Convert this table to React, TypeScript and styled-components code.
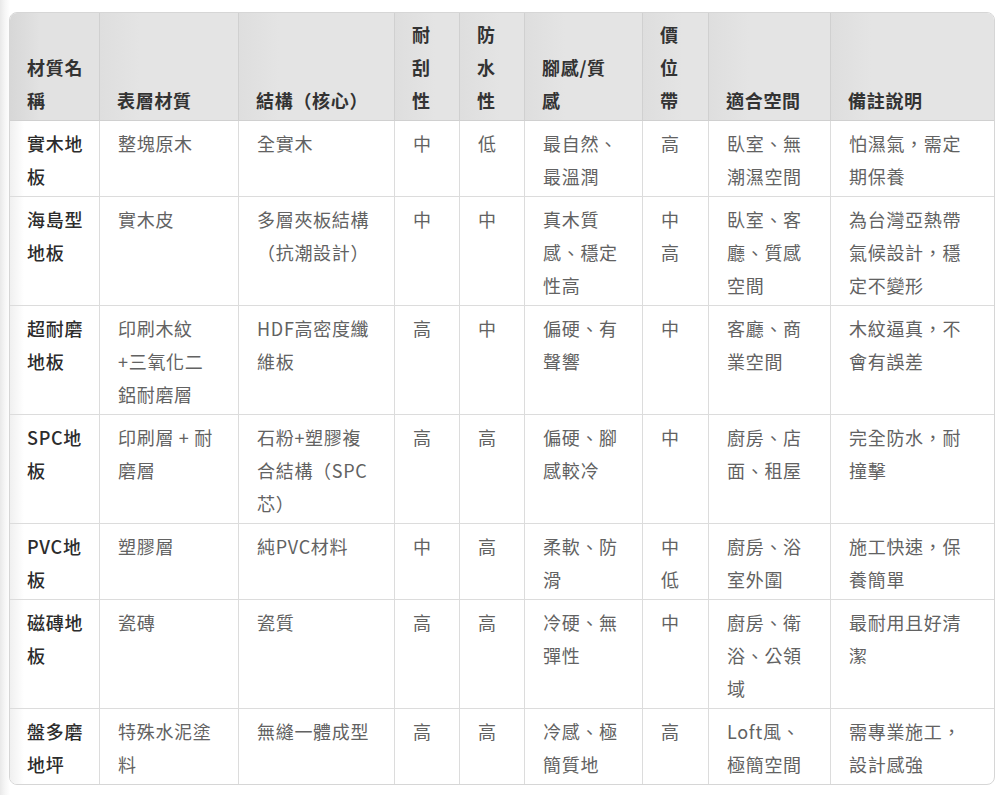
import React from 'react'
import styled, { createGlobalStyle } from 'styled-components'

const GlobalStyle = createGlobalStyle`
  html, body {
    margin: 0;
    padding: 0;
    background: #fff;
  }
  body {
    font-family: "Noto Sans CJK TC", "Noto Sans", sans-serif;
  }
`

const Page = styled.div`
  width: 1000px;
  height: 795px;
  box-sizing: border-box;
  padding: 12px 7px 0 9px;
  background: linear-gradient(to right, #e9e9e9 0, #f6f6f6 5px, #fff 10px);
`

const Table = styled.table`
  width: 984px;
  table-layout: fixed;
  border-collapse: separate;
  border-spacing: 0;
  border: 1px solid #d6d6d6;
  border-radius: 8px;
  overflow: hidden;
  background: #fff;
  font-size: 18px;
  line-height: 33px;
  letter-spacing: 0.7px;
  white-space: nowrap;
`

const HeadCell = styled.th`
  text-align: left;
  vertical-align: bottom;
  padding: 5px 16px 3px 17px;
  background: linear-gradient(to right, #dedede 0, #e4e4e4 40px, #e4e4e4 100%);
  color: #333;
  font-weight: 600;
  border-right: 1px solid #d0d0d0;
  border-bottom: 1px solid #d0d0d0;
  &:first-child {
    background: linear-gradient(to right, #d7d7d7 0, #e2e2e2 30px);
  }
  &:last-child {
    border-right: none;
  }
`

const NameCell = styled.th`
  text-align: left;
  vertical-align: top;
  padding: 6px 14px 3px 17px;
  color: #2c2c2c;
  font-weight: 500;
  border-right: 1px solid #dcdcdc;
  border-bottom: 1px solid #dcdcdc;
  background: linear-gradient(to right, #f0f0f0 0, #fff 14px);
`

const Cell = styled.td`
  vertical-align: top;
  padding: 6px 16px 3px 18px;
  color: #626262;
  border-right: 1px solid #dcdcdc;
  border-bottom: 1px solid #dcdcdc;
  &:last-child {
    border-right: none;
  }
`

const Row = styled.tr`
  &:last-child ${Cell}, &:last-child ${NameCell} {
    border-bottom: none;
  }
`

const widths = [90, 139, 156, 65, 65, 118, 66, 122, 163]

const headers: string[][] = [
  ['材質名', '稱'],
  ['表層材質'],
  ['結構（核心）'],
  ['耐', '刮', '性'],
  ['防', '水', '性'],
  ['腳感/質', '感'],
  ['價', '位', '帶'],
  ['適合空間'],
  ['備註說明'],
]

const rows: string[][][] = [
  [['實木地', '板'], ['整塊原木'], ['全實木'], ['中'], ['低'], ['最自然、', '最溫潤'], ['高'], ['臥室、無', '潮濕空間'], ['怕濕氣，需定', '期保養']],
  [['海島型', '地板'], ['實木皮'], ['多層夾板結構', '（抗潮設計）'], ['中'], ['中'], ['真木質', '感、穩定', '性高'], ['中', '高'], ['臥室、客', '廳、質感', '空間'], ['為台灣亞熱帶', '氣候設計，穩', '定不變形']],
  [['超耐磨', '地板'], ['印刷木紋', '+三氧化二', '鋁耐磨層'], ['HDF高密度纖', '維板'], ['高'], ['中'], ['偏硬、有', '聲響'], ['中'], ['客廳、商', '業空間'], ['木紋逼真，不', '會有誤差']],
  [['SPC地', '板'], ['印刷層 + 耐', '磨層'], ['石粉+塑膠複', '合結構（SPC', '芯）'], ['高'], ['高'], ['偏硬、腳', '感較冷'], ['中'], ['廚房、店', '面、租屋'], ['完全防水，耐', '撞擊']],
  [['PVC地', '板'], ['塑膠層'], ['純PVC材料'], ['中'], ['高'], ['柔軟、防', '滑'], ['中', '低'], ['廚房、浴', '室外圍'], ['施工快速，保', '養簡單']],
  [['磁磚地', '板'], ['瓷磚'], ['瓷質'], ['高'], ['高'], ['冷硬、無', '彈性'], ['中'], ['廚房、衛', '浴、公領', '域'], ['最耐用且好清', '潔']],
  [['盤多磨', '地坪'], ['特殊水泥塗', '料'], ['無縫一體成型'], ['高'], ['高'], ['冷感、極', '簡質地'], ['高'], ['Loft風、', '極簡空間'], ['需專業施工，', '設計感強']],
]

const Lines = ({ lines }: { lines: string[] }) => (
  <>
    {lines.map((line, i) => (
      <React.Fragment key={i}>
        {i > 0 && <br />}
        {line}
      </React.Fragment>
    ))}
  </>
)

const App = () => {
  return (
    <Page>
      <GlobalStyle />
      <Table>
        <colgroup>
          {widths.map((w, i) => (
            <col key={i} style={{ width: w }} />
          ))}
        </colgroup>
        <thead>
          <tr>
            {headers.map((h, i) => (
              <HeadCell key={i}>
                <Lines lines={h} />
              </HeadCell>
            ))}
          </tr>
        </thead>
        <tbody>
          {rows.map((row, r) => (
            <Row key={r}>
              {row.map((cell, c) =>
                c === 0 ? (
                  <NameCell key={c} scope="row">
                    <Lines lines={cell} />
                  </NameCell>
                ) : (
                  <Cell key={c}>
                    <Lines lines={cell} />
                  </Cell>
                ),
              )}
            </Row>
          ))}
        </tbody>
      </Table>
    </Page>
  )
}

export default App
